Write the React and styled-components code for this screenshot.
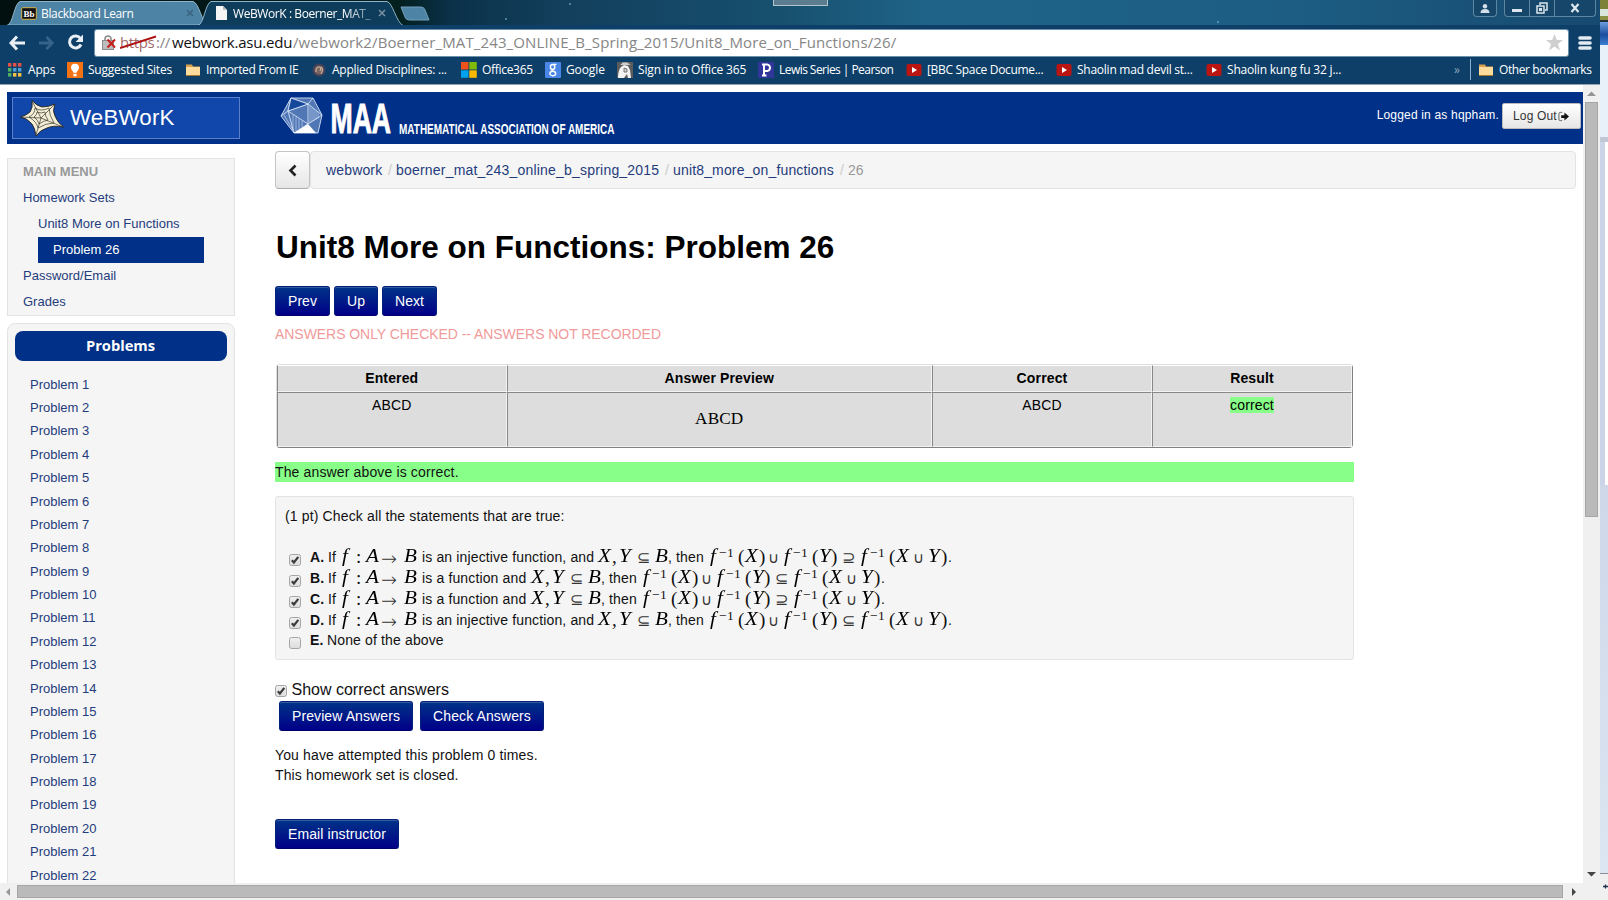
import React from 'react';
import styled, { createGlobalStyle, css } from 'styled-components';

const arial = '"Liberation Sans", Arial, sans-serif';
const chromeFont = '"Open Sans", "Noto Sans", sans-serif';
const serif = '"Liberation Serif", "Times New Roman", serif';
const symbols = '"DejaVu Sans Light", "DejaVu Sans", sans-serif';

const Global = createGlobalStyle`
  * { box-sizing: border-box; }
  body { margin: 0; overflow: hidden; font-family: ${arial}; background: #fff; }
`;

const Screen = styled.div`
  display: flex;
  width: 1608px;
  height: 900px;
  overflow: hidden;
`;
const BrowserWindow = styled.div`
  display: flex;
  flex-direction: column;
  width: 1600px;
`;

/* ---------- title bar ---------- */
const TitleBar = styled.header`
  position: relative;
  display: flex;
  height: 25px;
  padding-left: 7px;
  background:
    radial-gradient(circle at 570px 4px, #5f93ad 0 0.5px, transparent 1.5px),
    radial-gradient(circle at 506px 19px, #5f93ad 0 0.5px, transparent 1.5px),
    radial-gradient(circle at 1218px 22px, #5f9fbd 0 0.5px, transparent 1.5px),
    linear-gradient(90deg, #02100f 0, #03201f 400px, #0b3149 450px, #123f5c 560px, #17506f 780px, #1f6488 930px, #1d5d83 1300px, #174a70 1600px);
`;
const Tab = styled.div`
  position: relative;
  display: flex;
  align-items: center;
  width: ${(p) => p.$w}px;
  height: 25px;
  margin-left: ${(p) => p.$ml || 0}px;
  padding: 1px 0 0 ${(p) => p.$pl}px;
  color: #fff;
  font: 12px ${chromeFont};
  white-space: nowrap;
`;
const TabShape = styled.svg`
  position: absolute;
  left: 0;
  top: 0;
`;
const TabTitle = styled.span`
  position: relative;
  width: ${(p) => p.$w}px;
  margin-left: ${(p) => p.$gap || 4}px;
  letter-spacing: ${(p) => p.$ls}px;
  ${(p) => p.$fade && css`mask-image: linear-gradient(90deg, #000 80%, rgba(0, 0, 0, 0.3));`}
`;
const Relative = styled.span`
  position: relative;
  display: flex;
`;
const TabClose = styled.svg`
  position: relative;
  margin-left: auto;
  margin-right: ${(p) => p.$mr}px;
`;
const NewTab = styled.svg`
  margin: 6px 0 0 -4px;
`;
const Notch = styled.div`
  position: absolute;
  left: 773px;
  top: 0;
  width: 55px;
  height: 6px;
  border: 1px solid #b4c4cc;
  border-top: 0;
  background: #5c7d90;
`;
const Controls = styled.div`
  display: flex;
  gap: 7px;
  margin: 0 4px 0 auto;
  height: 17px;
`;
const ControlGroup = styled.div`
  display: flex;
  border: 1px solid #5c86a2;
  border-top: 0;
  border-radius: 0 0 4px 4px;
  background: #16466a;
`;
const Control = styled.div`
  display: flex;
  align-items: center;
  justify-content: center;
  width: ${(p) => p.$w}px;
  & + & { border-left: 1px solid #5c86a2; }
`;

/* ---------- toolbar ---------- */
const Toolbar = styled.div`
  display: flex;
  align-items: center;
  height: 35px;
  padding: 0 7px 0 8px;
  background: #0d3f69;
`;
const NavIcons = styled.div`
  display: flex;
  align-items: center;
  gap: 12px;
  width: 87px;
`;
const Omnibox = styled.div`
  display: flex;
  align-items: center;
  width: 1473px;
  height: 26px;
  margin-right: 10px;
  padding: 0 5px 0 7px;
  border-radius: 2px;
  background: #fff;
  box-shadow: 0 0 0 1px #6d90ab;
`;
const Url = styled.div`
  display: flex;
  margin-left: 4px;
  padding-bottom: 2px;
  color: #868686;
  font: 15px ${chromeFont};
  white-space: pre;
`;
const UrlPart = styled.span`
  position: relative;
  width: ${(p) => p.$w}px;
  color: ${(p) => p.$c || 'inherit'};
  letter-spacing: ${(p) => p.$ls}px;
`;
const Strike = styled.svg`
  position: absolute;
  left: 0;
  top: 3px;
`;
const Star = styled.svg`
  margin-left: auto;
`;

/* ---------- bookmarks ---------- */
const Bookmarks = styled.nav`
  display: flex;
  align-items: center;
  height: 25px;
  padding: 0 0 5px 8px;
  border-bottom: 1px solid #93a3b2;
  background: #0d3f69;
  color: #fff;
  font: 12px/20px ${chromeFont};
  white-space: nowrap;
`;
const BookmarkItem = styled.div`
  display: flex;
  align-items: center;
  gap: 5px;
  width: ${(p) => p.$w}px;
  letter-spacing: ${(p) => p.$ls}px;
  svg { flex: none; }
`;
const More = styled.span`
  width: 16px;
  margin-left: auto;
  color: #8ba3b8;
`;
const BookmarkDivider = styled.span`
  width: 1px;
  height: 21px;
  margin-right: 7px;
  background: #8fb0cc;
`;

/* ---------- page ---------- */
const Viewport = styled.div`
  display: flex;
  height: 798px;
`;
const Page = styled.div`
  width: 1583px;
  padding: 7px 0 0 7px;
  overflow: hidden;
  background: #fff;
`;
const Masthead = styled.div`
  display: flex;
  height: 52px;
  padding: 5px 2px 0 5px;
  background: #003087;
`;
const WebworkLogo = styled.div`
  display: flex;
  align-items: center;
  gap: 6px;
  width: 228px;
  height: 42px;
  padding-left: 7px;
  border: 1px solid #5b7fca;
  background: #1147ab;
  color: #fff;
  font-size: 22.3px;
  letter-spacing: 0.2px;
`;
const MaaLogo = styled.svg`
  margin-left: 40px;
  overflow: visible;
`;
const Account = styled.div`
  display: flex;
  align-items: flex-start;
  gap: 3px;
  margin-left: auto;
  padding-top: 6px;
  color: #fff;
  font-size: 12px;
  line-height: 24px;
`;
const LoggedIn = styled.span`
  letter-spacing: 0.18px;
`;
const LogOut = styled.button`
  display: flex;
  align-items: center;
  gap: 1px;
  width: 79px;
  height: 26px;
  padding: 0 0 0 10px;
  border: 1px solid #bbb;
  border-radius: 2px;
  background: linear-gradient(#fff, #e6e6e6);
  color: #333;
  font: 12px ${arial};
  letter-spacing: 0.15px;
  white-space: nowrap;
`;
const Columns = styled.div`
  display: flex;
`;
const Sidebar = styled.aside`
  width: 228px;
  margin-right: 40px;
  padding-top: 14px;
  font-size: 13px;
  color: #1f3c7c;
`;
const Menu = styled.div`
  height: 158px;
  padding: 0 15px;
  border: 1px solid #e3e3e3;
  background: #f5f5f5;
  line-height: 26px;
`;
const MenuTitle = styled.div`
  color: #999;
  font-weight: bold;
`;
const MenuItem = styled.div`
  width: ${(p) => (p.$current ? '166px' : 'auto')};
  margin-left: ${(p) => (p.$level ? 15 : 0)}px;
  padding-left: ${(p) => (p.$current ? 15 : 0)}px;
  ${(p) => p.$current && css`background: #003087; color: #fff;`}
`;
const ProblemPanel = styled.div`
  height: 600px;
  margin-top: 7px;
  padding: 7px;
  border: 1px solid #e3e3e3;
  border-radius: 8px 8px 0 0;
  background: #f5f5f5;
`;
const PanelTitle = styled.div`
  width: 212px;
  height: 30px;
  margin-bottom: 11.7px;
  padding-right: 1px;
  border-radius: 8px;
  background: #003087;
  color: #fff;
  font: bold 14.7px/29px ${chromeFont};
  text-align: center;
`;
const ProblemLink = styled.div`
  height: 23.38px;
  padding-left: 15px;
  line-height: 23px;
`;

const Main = styled.main`
  width: 1301px;
  padding-top: 7px;
  color: #111;
  font-size: 14px;
  line-height: 20px;
  letter-spacing: 0.14px;
`;
const CrumbRow = styled.div`
  display: flex;
  height: 38px;
`;
const BackButton = styled.div`
  display: flex;
  align-items: center;
  justify-content: center;
  width: 35px;
  border: 1px solid #c4c4c4;
  border-bottom-color: #acacac;
  border-radius: 4px;
  background: linear-gradient(#fff, #e6e6e6);
`;
const Crumbs = styled.div`
  display: flex;
  flex: 1;
  padding-left: 15px;
  border: 1px solid #e3e3e3;
  border-radius: 4px;
  background: #f5f5f5;
  color: #1f3c7c;
  line-height: 36px;
`;
const Crumb = styled.span`
  width: ${(p) => p.$w}px;
  letter-spacing: ${(p) => p.$ls || 0}px;
  color: ${(p) => p.$c || 'inherit'};
`;
const Title = styled.h1`
  margin: 38px 0 19px 1px;
  color: #000;
  font-size: 31.5px;
  line-height: 40px;
  letter-spacing: 0;
  white-space: nowrap;
`;
const ButtonRow = styled.div`
  display: flex;
  gap: ${(p) => p.$gap || 4}px;
  margin-left: ${(p) => p.$ml || 0}px;
`;
const Button = styled.button`
  width: ${(p) => p.$w}px;
  height: 30px;
  padding: 0;
  border: 1px solid #00207a;
  border-bottom-color: #00006a;
  border-radius: 3px;
  background: linear-gradient(#003388, #000088);
  box-shadow: inset 0 1px 0 rgba(255, 255, 255, 0.2);
  color: #fff;
  font: 14px ${arial};
  letter-spacing: ${(p) => p.$ls || 0}px;
  white-space: nowrap;
`;
const Warning = styled.p`
  margin: 8px 0 20px;
  color: #f09a9a;
  letter-spacing: -0.05px;
`;
const Results = styled.div`
  display: grid;
  grid-template-columns: 229.5px 425.5px 220px 200px;
  grid-template-rows: 27px 55px;
  width: 1077px;
  margin-left: 1px;
  border: 1px solid #ddd;
  border-right-color: #808080;
  border-bottom-color: #808080;
  border-radius: 4px;
  text-align: center;
`;
const Cell = styled.div`
  padding: ${(p) => p.$pt ?? 2}px 0 0;
  border: 1px solid #f3f3f3;
  border-left-color: #888;
  border-top-color: ${(p) => (p.$head ? '#fff' : '#888')};
  background: #ddd;
  font-weight: ${(p) => (p.$head ? 'bold' : 'normal')};
  color: #000;
  ${(p) => p.$serif && css`font: 17.2px/20px ${serif};`}
`;
const Mark = styled.span`
  background: #88ff88;
`;
const Banner = styled.div`
  width: 1079px;
  height: 20px;
  margin: 14px 0;
  background: #88ff88;
`;
const Problem = styled.section`
  width: 1079px;
  height: 164px;
  padding: 9px;
  border: 1px solid #e3e3e3;
  border-radius: 3px;
  background: #f5f5f5;
`;
const Choices = styled.div`
  margin-top: 20px;
`;
const Choice = styled.div`
  display: flex;
  height: ${(p) => p.$h || 21}px;
  padding-left: 4px;
  line-height: 23px;
  white-space: pre;
`;
const CheckIcon = styled.svg`
  flex: none;
  margin-top: ${(p) => p.$mt || 0}px;
`;
const Piece = styled.span`
  flex: none;
  width: ${(p) => p.$w}px;
  font-weight: ${(p) => (p.$b ? 'bold' : 'normal')};
`;
const Var = styled.i`
  flex: none;
  width: ${(p) => p.$w}px;
  color: #000;
  font: italic 18.5px/21px ${serif};
  letter-spacing: 0;
  transform: scaleX(1.14);
  transform-origin: left;
`;
const Sym = styled.span`
  flex: none;
  width: ${(p) => p.$w}px;
  color: #111;
  font: 19px/21px ${serif};
  letter-spacing: 0;
  sup {
    position: relative;
    display: block;
    top: -4px;
    font-size: 13.5px;
    letter-spacing: 0.5px;
    line-height: 21px;
  }
`;
const Relation = styled.span`
  flex: none;
  width: ${(p) => p.$w}px;
  color: #333;
  font: 200 ${(p) => p.$s || 15.5}px/24px ${symbols};
  letter-spacing: 0;
`;
const ShowCorrect = styled.div`
  display: flex;
  gap: 3.5px;
  margin-top: 19px;
  height: 22px;
  font-size: 16px;
  line-height: 21px;
  letter-spacing: 0;
`;
const Attempts = styled.p`
  margin: 14px 0 34px;
`;

/* ---------- scrollbars and right edge ---------- */
const VScroll = styled.div`
  display: flex;
  flex-direction: column;
  align-items: center;
  width: 17px;
  padding: 6px 0 6px;
  background: #f0f0f0;
  svg:last-child { margin-top: auto; }
`;
const VThumb = styled.div`
  width: 13px;
  height: 415px;
  margin-top: 6px;
  border: 1px solid #a6a6a6;
  background: #bababa;
`;
const HScroll = styled.div`
  display: flex;
  align-items: center;
  height: 17px;
  padding-left: 6px;
  background: #f0f0f0;
`;
const HThumb = styled.div`
  width: 1546px;
  height: 13px;
  margin: 0 9px 0 7px;
  border: 1px solid #a6a6a6;
  background: #bababa;
`;
const Edge = styled.div`
  display: flex;
  flex-direction: column;
  width: 8px;
`;
const EdgePart = styled.div`
  height: ${(p) => p.$h}px;
  background: ${(p) => p.$bg};
`;

const Check = ({ on, mt }) => (
  <CheckIcon $mt={mt} width="13" height="13" viewBox="0 0 13 13">
    <defs>
      <linearGradient id="box" x1="0" y1="0" x2="0" y2="1">
        <stop offset="0" stopColor="#f0f0f0" />
        <stop offset="1" stopColor="#dcdcdc" />
      </linearGradient>
    </defs>
    <rect x="0.5" y="0.5" width="11" height="11" rx="2" fill="url(#box)" stroke="#a5a5a5" />
    {on && <path d="M2.8 6.3L4.9 8.5L9.3 2.8" fill="none" stroke="#3c3c3c" strokeWidth="2.2" />}
  </CheckIcon>
);

const Folder = () => (
  <svg width="16" height="16" viewBox="0 0 16 16">
    <path d="M1 2.5h6l1 2h7v9.5H1z" fill="#d9a24e" />
    <path d="M1 5h14v8H1z" fill="#fbdc9c" />
    <path d="M1 13.5h14" stroke="#a97930" />
  </svg>
);
const YouTube = () => (
  <svg width="16" height="16" viewBox="0 0 16 16">
    <rect x="0.5" y="2" width="15" height="12" rx="2" fill="#bb1512" />
    <path d="M6 5l5 3-5 3z" fill="#fff" />
  </svg>
);
const appColors = ['#e0524a', '#e0524a', '#e0524a', '#4fb061', '#49a0d8', '#49a0d8', '#4fb061', '#f1c245', '#f1c245'];
const icons = {
  apps: (
    <svg width="15" height="14" viewBox="0 0 15 14">
      {appColors.map((c, i) => (
        <rect key={i} x={(i % 3) * 5} y={Math.floor(i / 3) * 5} width="3.4" height="3.6" fill={c} />
      ))}
    </svg>
  ),
  bulb: (
    <svg width="16" height="16" viewBox="0 0 16 16">
      <rect width="16" height="16" fill="#f37314" />
      <path d="M8 1.8a4 4 0 0 0-4 4c0 2 2 3 2.4 5h3.2c.4-2 2.4-3 2.4-5a4 4 0 0 0-4-4z" fill="#fff" />
      <rect x="6.4" y="11.8" width="3.2" height="2.5" fill="#fff" />
    </svg>
  ),
  folder: <Folder />,
  disc: (
    <svg width="16" height="16" viewBox="0 0 16 16">
      <circle cx="8" cy="8" r="6.6" fill="#41405a" />
      <circle cx="8" cy="8" r="4.600" fill="#77645f" />
      <path d="M5 10c0-3 1-5 3-5s2 2 1 4M10 5c2 1 2 4 0 7" fill="none" stroke="#c9ac9a" strokeWidth="1.200" />
    </svg>
  ),
  office: (
    <svg width="16" height="16" viewBox="0 0 16 16">
      <path d="M0 0h7.5v7.5H0z" fill="#f1511b" />
      <path d="M8.3 0h7.5v7.5H8.3z" fill="#80bb0a" />
      <path d="M0 8.3h7.5v7.5H0z" fill="#00a2ed" />
      <path d="M8.3 8.3h7.5v7.5H8.3z" fill="#fdb900" />
    </svg>
  ),
  google: (
    <svg width="16" height="16" viewBox="0 0 16 16">
      <rect width="16" height="16" rx="1" fill="#4a86e8" />
      <ellipse cx="7.600" cy="5" rx="2.200" ry="2.500" fill="none" stroke="#fff" strokeWidth="1.400" />
      <ellipse cx="7.800" cy="11.500" rx="2.900" ry="2.200" fill="none" stroke="#fff" strokeWidth="1.400" />
      <path d="M8 2.400h3.500M7 7.300q-1 1 1.500 2" fill="none" stroke="#fff" strokeWidth="1.200" />
    </svg>
  ),
  signin: (
    <svg width="16" height="16" viewBox="0 0 16 16">
      <rect width="16" height="16" fill="#5b5b5b" />
      <path d="M1 16c0-5 1-9 3-11l3-2 4 1 2 4 1 8h-3l-1-4-3 4z" fill="#f4f4f4" />
      <path d="M3 3l3-3h4l4 3M7 6l3 1v3H7z" fill="#ccc" stroke="#777" />
    </svg>
  ),
  pearson: (
    <svg width="16" height="16" viewBox="0 0 16 16">
      <rect width="16" height="16" fill="#31369b" />
      <path d="M4 2.600h5.500a3.300 3.300 0 0 1 0 6.400H6.500M6 2.600v11M4 13.400h4.500" fill="none" stroke="#fff" strokeWidth="2" />
    </svg>
  ),
  youtube: <YouTube />,
};

const bookmarks = [
  ['apps', 'Apps', 59, -0.2],
  ['bulb', 'Suggested Sites', 118, -0.22],
  ['folder', 'Imported From IE', 126, -0.35],
  ['disc', 'Applied Disciplines: ...', 150, -0.25],
  ['office', 'Office365', 84, -0.3],
  ['google', 'Google', 72, -0.1],
  ['signin', 'Sign in to Office 365', 141, -0.15],
  ['pearson', 'Lewis Series | Pearson', 148, -0.55],
  ['youtube', '[BBC Space Docume...', 150, -0.32],
  ['youtube', 'Shaolin mad devil st...', 150, -0.25],
  ['youtube', 'Shaolin kung fu 32 j...', 150, -0.2],
];

const Inverse = () => (
  <>
    <Var $w={9}>f</Var>
    <Sym $w={19}><sup>−1</sup></Sym>
  </>
);

const Statement = ({ letter, injective, superset, h }) => (
  <Choice $h={h}>
    <Check on mt={8} />
    <Piece $w={8} />
    <Piece $b $w={18}>{letter}.</Piece>
    <Piece $w={14}>If</Piece>
    <Var $w={14}>f</Var>
    <Sym $w={10}>:</Sym>
    <Var $w={15}>A</Var>
    <Relation $w={23} $s={19}>→</Relation>
    <Var $w={18}>B</Var>
    <Piece $w={injective ? 176 : 109}>{injective ? 'is an injective function, and' : 'is a function and'}</Piece>
    <Var $w={14}>X</Var>
    <Sym $w={7}>,</Sym>
    <Var $w={18}>Y</Var>
    <Relation $w={18}>⊆</Relation>
    <Var $w={13}>B</Var>
    <Piece $w={8}>,</Piece>
    <Piece $w={34}>then</Piece>
    <Inverse />
    <Sym $w={7}>(</Sym>
    <Var $w={14}>X</Var>
    <Sym $w={9}>)</Sym>
    <Relation $w={16} $s={15}>∪</Relation>
    <Inverse />
    <Sym $w={7}>(</Sym>
    <Var $w={12}>Y</Var>
    <Sym $w={11}>)</Sym>
    <Relation $w={19}>{superset ? '⊇' : '⊆'}</Relation>
    <Inverse />
    <Sym $w={7}>(</Sym>
    <Var $w={17}>X</Var>
    <Relation $w={15} $s={15}>∪</Relation>
    <Var $w={13}>Y</Var>
    <Sym $w={7}>)</Sym>
    <Piece>.</Piece>
  </Choice>
);

export default function App() {
  return (
    <Screen>
      <Global />
      <BrowserWindow>
        <TitleBar>
          <Tab $w={200} $pl={14}>
            <TabShape width="200" height="25">
              <path d="M0.500 25C6 24 7 4 13 1.500H186C192 3 195 22 200 25z" fill="#4d83a5" stroke="#8fb4ca" />
            </TabShape>
            <Relative>
              <svg width="16" height="13" viewBox="0 0 16 13">
                <rect x="0.700" y="0.700" width="14.600" height="11.600" rx="1" fill="#111" stroke="#d6b34a" />
                <text x="2.500" y="9.500" fill="#fff" fontFamily="Liberation Serif" fontWeight="bold" fontSize="9">Bb</text>
              </svg>
            </Relative>
            <TabTitle $w={110} $ls={-0.35}>Blackboard Learn</TabTitle>
            <TabClose $mr={13} width="8" height="8" viewBox="0 0 8 8">
              <path d="M1 1l6 6M7 1l-6 6" stroke="#3a6480" strokeWidth="1.600" />
            </TabClose>
          </Tab>
          <Tab $w={206} $ml={-9} $pl={18}>
            <TabShape width="206" height="25">
              <path d="M0 25.500C6 24 7 4 13 1.500H189C195 3 198 22 205 25.500z" fill="#0e3c5b" stroke="#8fb4ca" />
            </TabShape>
            <Relative>
              <svg width="11" height="14" viewBox="0 0 11 14">
                <path d="M0 0h7l4 4v10H0z" fill="#f5f5f5" />
                <path d="M7 0v4h4" fill="#bbb" />
              </svg>
            </Relative>
            <TabTitle $w={140} $gap={6} $ls={-0.42} $fade>WeBWorK : Boerner_MAT_</TabTitle>
            <TabClose $mr={18} width="8" height="8" viewBox="0 0 8 8">
              <path d="M1 1l6 6M7 1l-6 6" stroke="#7890a0" strokeWidth="1.600" />
            </TabClose>
          </Tab>
          <NewTab width="30" height="15" viewBox="0 0 30 15">
            <path d="M1 1h20q3 0 4 3l4 10H9q-3 0-4-3z" fill="#4d83a5" stroke="#739fba" />
          </NewTab>
          <Notch />
          <Controls>
            <ControlGroup>
              <Control $w={22}>
                <svg width="10" height="9" viewBox="0 0 10 9">
                  <circle cx="5" cy="2.300" r="2.200" fill="#d5e0e8" />
                  <path d="M0.500 9q0-4 4.500-4t4.500 4z" fill="#d5e0e8" />
                </svg>
              </Control>
            </ControlGroup>
            <ControlGroup>
              <Control $w={24}>
                <svg width="12" height="10"><rect x="1" y="6" width="10" height="3" fill="#dce6ec" /></svg>
              </Control>
              <Control $w={25}>
                <svg width="12" height="12" viewBox="0 0 12 12" fill="none" stroke="#dce6ec" strokeWidth="1.500">
                  <path d="M4 3V1h7v7H9" />
                  <rect x="1" y="4" width="7" height="7" />
                  <rect x="3.700" y="6.700" width="1.600" height="1.600" />
                </svg>
              </Control>
              <Control $w={41}>
                <svg width="12" height="10" viewBox="0 0 12 10">
                  <path d="M2.500 1l7 8M9.500 1l-7 8" stroke="#dce6ec" strokeWidth="2.200" />
                </svg>
              </Control>
            </ControlGroup>
          </Controls>
        </TitleBar>

        <Toolbar>
          <NavIcons>
            <svg width="18" height="16" viewBox="0 0 18 16" fill="none" stroke="#e9eff4" strokeWidth="3">
              <path d="M9 1.500L3 8l6 6.500M3 8h14" />
            </svg>
            <svg width="17" height="16" viewBox="0 0 18 16" fill="none" stroke="#35638a" strokeWidth="3">
              <path d="M9 1.500L15 8l-6 6.500M15 8H1" />
            </svg>
            <svg width="17" height="17" viewBox="0 0 17 17">
              <path d="M13.500 4.500A6 6 0 1 0 14 10.500" fill="none" stroke="#e9eff4" strokeWidth="3" />
              <path d="M16 0.500V8H8.500z" fill="#e9eff4" />
            </svg>
          </NavIcons>
          <Omnibox>
            <svg width="14" height="15" viewBox="0 0 14 15">
              <path d="M3 6V4a3 3 0 0 1 6 0v2" fill="none" stroke="#8c8c8c" strokeWidth="1.600" />
              <rect x="0.500" y="5.500" width="11" height="9" fill="#bdbdbd" stroke="#8c8c8c" />
              <path d="M5.500 4.500l7.500 8M13 4.500l-7.500 8" stroke="#c8211c" strokeWidth="2" />
            </svg>
            <Url>
              <UrlPart $w={36} $c="#a06a6a" $ls={-0.4}>
                https
                <Strike width="38" height="15"><path d="M0 13L36 1.500" stroke="#b01515" strokeWidth="2" /></Strike>
              </UrlPart>
              <UrlPart $w={16} $ls={-0.3}>://</UrlPart>
              <UrlPart $w={121} $c="#111" $ls={-0.2}>webwork.asu.edu</UrlPart>
              <UrlPart $ls={0.12}>/webwork2/Boerner_MAT_243_ONLINE_B_Spring_2015/Unit8_More_on_Functions/26/</UrlPart>
            </Url>
            <Star width="17" height="17" viewBox="0 0 17 17">
              <path d="M8.500 0l2.300 6h6.200l-5 4 2 6.500-5.500-4-5.500 4 2-6.500-5-4h6.200z" fill="#cfcfcf" />
            </Star>
          </Omnibox>
          <svg width="14" height="16" viewBox="0 0 14 16">
            <path d="M2 3h10M2 8h10M2 13h10" stroke="#e4ebf1" strokeWidth="3.600" strokeLinecap="round" />
          </svg>
        </Toolbar>

        <Bookmarks>
          {bookmarks.map(([icon, label, w, ls]) => (
            <BookmarkItem key={label} $w={w} $ls={ls}>{icons[icon]}{label}</BookmarkItem>
          ))}
          <More>»</More>
          <BookmarkDivider />
          <BookmarkItem $w={122} $ls={-0.4}><Folder />Other bookmarks</BookmarkItem>
        </Bookmarks>

        <Viewport>
          <Page>
            <Masthead>
              <WebworkLogo>
                <svg width="44" height="37" viewBox="0 0 44 37">
                  <path d="M12 0.500Q17 6 22 7 29 7 35 4 32 11 35 16 37 22 43.500 27 33 25 27 28 20 30 16 36 15 28 12 24 7 18 0.500 17 7 15 10 12 13 8 12 0.500z" fill="#f3eed5" stroke="#26241c" strokeWidth="0.900" />
                  <path d="M12 1l9 17L35 4M1 17l20 1L43 27M16 35l5-17M15 8q6 4 14 0 0 7 5 15-8 0-16 5-1-6-9-11 6-3 6-9zM17 12q4 2 8 0 0 4 3 8-5 1-9 4-1-4-5-7 3-2 3-5z" fill="none" stroke="#3a372c" strokeWidth="0.700" />
                </svg>
                WeBWorK
              </WebworkLogo>
              <MaaLogo width="340" height="42" viewBox="0 0 340 42">
                <g fill="none" stroke="#d4e1f6" strokeWidth="0.900">
                  <path d="M11 1h22l9 17-4 18H14L1 19z" fill="#5177b5" />
                  <path d="M11 1l17 6 5-6M28 7L8 14 1 19M8 14L11 1M8 14l6 22M28 7l14 11-14 9zM8 14l20 13-14 9" />
                  <path d="M11 1L28 7 8 14z" fill="#15479a" />
                  <path d="M30 9v17M32 11v14M34 12v12M36 14v9M38 15v7M13 18v15M16 20v14M19 22v10M22 24v6M4 18l9 15" strokeWidth="0.600" />
                </g>
                <path d="M14 36l14-9 8 9z" fill="#fff" />
                <g fill="#fff" fontFamily="Liberation Sans Narrow, Liberation Sans, sans-serif" fontWeight="bold">
                  <text x="50.500" y="36" fontSize="43" textLength="60.500" lengthAdjust="spacingAndGlyphs" stroke="#fff" strokeWidth="1">MAA</text>
                  <text x="119" y="36.600" fontSize="14.200" textLength="215.500" lengthAdjust="spacingAndGlyphs">MATHEMATICAL ASSOCIATION OF AMERICA</text>
                </g>
              </MaaLogo>
              <Account>
                <LoggedIn>Logged in as hqpham.</LoggedIn>
                <LogOut>
                  Log Out
                  <svg width="11" height="11" viewBox="0 0 12 11">
                    <path d="M4.500 1H2.500Q1 1 1 2.500v6Q1 10 2.500 10h2" fill="none" stroke="#555" strokeWidth="1" />
                    <path d="M3.500 4h3.500V1.200l5 4.300-5 4.300V7H3.500z" fill="#111" />
                  </svg>
                </LogOut>
              </Account>
            </Masthead>

            <Columns>
              <Sidebar>
                <Menu>
                  <MenuTitle>MAIN MENU</MenuTitle>
                  <MenuItem>Homework Sets</MenuItem>
                  <MenuItem $level>Unit8 More on Functions</MenuItem>
                  <MenuItem $level $current>Problem 26</MenuItem>
                  <MenuItem>Password/Email</MenuItem>
                  <MenuItem>Grades</MenuItem>
                </Menu>
                <ProblemPanel>
                  <PanelTitle>Problems</PanelTitle>
                  {Array.from({ length: 22 }, (_, i) => (
                    <ProblemLink key={i}>Problem {i + 1}</ProblemLink>
                  ))}
                </ProblemPanel>
              </Sidebar>

              <Main>
                <CrumbRow>
                  <BackButton>
                    <svg width="9" height="13" viewBox="0 0 9 13">
                      <path d="M7.500 1.500L2.500 6.500l5 5" fill="none" stroke="#222" strokeWidth="2.600" />
                    </svg>
                  </BackButton>
                  <Crumbs>
                    <Crumb $w={62} $ls={0.15}>webwork</Crumb>
                    <Crumb $w={8} $c="#ccc">/</Crumb>
                    <Crumb $w={269} $ls={0.2}>boerner_mat_243_online_b_spring_2015</Crumb>
                    <Crumb $w={8} $c="#ccc">/</Crumb>
                    <Crumb $w={167} $ls={0.16}>unit8_more_on_functions</Crumb>
                    <Crumb $w={8} $c="#ccc">/</Crumb>
                    <Crumb $c="#999">26</Crumb>
                  </Crumbs>
                </CrumbRow>

                <Title>Unit8 More on Functions: Problem 26</Title>
                <ButtonRow>
                  <Button $w={55}>Prev</Button>
                  <Button $w={44}>Up</Button>
                  <Button $w={55}>Next</Button>
                </ButtonRow>
                <Warning>ANSWERS ONLY CHECKED -- ANSWERS NOT RECORDED</Warning>

                <Results>
                  <Cell $head>Entered</Cell>
                  <Cell $head>Answer Preview</Cell>
                  <Cell $head>Correct</Cell>
                  <Cell $head>Result</Cell>
                  <Cell>ABCD</Cell>
                  <Cell $serif $pt={16}>ABCD</Cell>
                  <Cell>ABCD</Cell>
                  <Cell><Mark>correct</Mark></Cell>
                </Results>

                <Banner>The answer above is correct.</Banner>

                <Problem>
                  (1 pt) Check all the statements that are true:
                  <Choices>
                    <Statement letter="A" injective superset />
                    <Statement letter="B" />
                    <Statement letter="C" superset />
                    <Statement letter="D" injective h={20} />
                    <Choice>
                      <Check mt={8} />
                      <Piece $w={8} />
                      <Piece $b $w={17}>E.</Piece>
                      <Piece>None of the above</Piece>
                    </Choice>
                  </Choices>
                </Problem>

                <ShowCorrect>
                  <Check on mt={6} />
                  Show correct answers
                </ShowCorrect>
                <ButtonRow $gap={7} $ml={4}>
                  <Button $w={134} $ls={0.1}>Preview Answers</Button>
                  <Button $w={124} $ls={0.1}>Check Answers</Button>
                </ButtonRow>
                <Attempts>
                  You have attempted this problem 0 times.<br />
                  This homework set is closed.
                </Attempts>
                <Button $w={124} $ls={0.1}>Email instructor</Button>
              </Main>
            </Columns>
          </Page>
          <VScroll>
            <svg width="9" height="5"><path d="M0 5L4.500 0.500 9 5z" fill="#959595" /></svg>
            <VThumb />
            <svg width="9" height="5"><path d="M0 0h9L4.500 4.500z" fill="#444" /></svg>
          </VScroll>
        </Viewport>
        <HScroll>
          <svg width="4" height="8"><path d="M4 0v8L0 4z" fill="#959595" /></svg>
          <HThumb />
          <svg width="4" height="8"><path d="M0 0v8l4-4z" fill="#444" /></svg>
        </HScroll>
      </BrowserWindow>
      <Edge>
        <EdgePart $h={20} $bg="linear-gradient(#7d8238 0 9px, #d9e6dd 9px 16px, #8a9144 16px)" />
        <EdgePart $h={2} $bg="#23303a" />
        <EdgePart $h={23} $bg="linear-gradient(#6c9fe0, #1c4d9e 55%, #3c7fd0)" />
        <EdgePart $h={92} $bg="#e8f0fa" />
        <EdgePart $h={5} $bg="#c0c8d6" />
        <EdgePart $h={343} $bg="linear-gradient(90deg, #ccd5e8 5px, #fff 5px)" />
        <EdgePart $h={388} $bg="linear-gradient(#cdd7e8, #dce6f2)" />
        <EdgePart $h={1} $bg="#8a8f96" />
        <EdgePart $h={26} $bg="#f0f0f0">
          <svg width="8" height="26"><path d="M3 12.500h5M5.500 10.500v4" stroke="#1e3350" strokeWidth="1.300" /></svg>
        </EdgePart>
      </Edge>
    </Screen>
  );
}
